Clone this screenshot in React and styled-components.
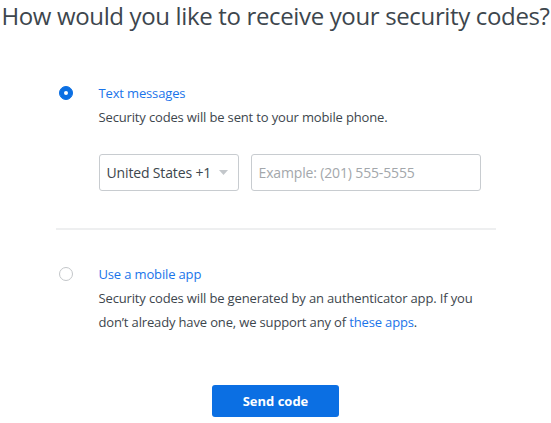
import React from 'react'
import styled, { createGlobalStyle } from 'styled-components'

const GlobalStyle = createGlobalStyle`
  body {
    margin: 0;
    background: #fff;
    font-family: "Open Sans", "Liberation Sans", sans-serif;
    color: #3d464d;
  }
`

const Page = styled.div`
  display: flex;
  flex-direction: column;
  align-items: center;
`

const Heading = styled.h1`
  margin: 0;
  font-size: 24px;
  letter-spacing: -0.35px;
  line-height: 32px;
  font-weight: 400;
  color: #3d464d;
  white-space: nowrap;
  text-align: center;
`

const Options = styled.div`
  width: 440px;
  margin-top: 49px;
  display: flex;
  flex-direction: column;
`

const OptionRow = styled.div`
  display: grid;
  grid-template-columns: 43px 1fr;
`

const RadioCell = styled.div`
  padding-left: 3px;
  height: 24px;
  display: flex;
  align-items: center;
`

const Radio = styled.span`
  box-sizing: border-box;
  width: 14px;
  height: 14px;
  border-radius: 50%;
  display: flex;
  align-items: center;
  justify-content: center;
  background: ${p => (p.$checked ? '#0b6fe3' : '#fff')};
  border: 1px solid ${p => (p.$checked ? '#0b6fe3' : '#c3c6c9')};

  &::after {
    content: '';
    width: 4px;
    height: 4px;
    border-radius: 50%;
    background: #fff;
    display: ${p => (p.$checked ? 'block' : 'none')};
  }
`

const Body = styled.div`
  font-size: 13px;
  letter-spacing: -0.15px;
  line-height: 24px;
`

const Title = styled.div`
  color: #1a74ea;
`

const Desc = styled.div`
  color: #3d464d;
`

const Link = styled.a`
  color: #1a74ea;
  text-decoration: none;
`

const PhoneRow = styled.div`
  display: flex;
  gap: 12px;
  margin-top: 25px;
`

const Select = styled.div`
  box-sizing: border-box;
  width: 140px;
  height: 37px;
  border: 1px solid #c8ccd0;
  border-radius: 3px;
  display: flex;
  align-items: center;
  justify-content: space-between;
  padding: 0 10px 0 7px;
  font-size: 14px;
  color: #3d464d;
`

const Input = styled.input`
  box-sizing: border-box;
  width: 230px;
  height: 37px;
  border: 1px solid #c8ccd0;
  border-radius: 3px;
  padding: 0 7px;
  font-family: inherit;
  font-size: 14px;
  letter-spacing: -0.15px;
  color: #3d464d;

  &::placeholder {
    color: #a3a7ab;
  }
`

const Divider = styled.hr`
  margin: 37px 0 32px;
  border: none;
  border-top: 2px solid #eeeff0;
`

const Button = styled.button`
  margin-top: 51px;
  width: 127px;
  height: 32px;
  border: none;
  border-radius: 3px;
  background: #0b6fe3;
  color: #fff;
  font-family: inherit;
  font-size: 13px;
  font-weight: 700;
`

const Caret = () => (
  <svg width="9" height="5" viewBox="0 0 9 5">
    <path d="M0 0h9L4.5 5z" fill="#c3c7cb" />
  </svg>
)

export default function App() {
  return (
    <Page>
      <GlobalStyle />
      <Heading>How would you like to receive your security codes?</Heading>
      <Options>
        <OptionRow>
          <RadioCell><Radio $checked /></RadioCell>
          <Body>
            <Title>Text messages</Title>
            <Desc>Security codes will be sent to your mobile phone.</Desc>
            <PhoneRow>
              <Select>
                <span>United States +1</span>
                <Caret />
              </Select>
              <Input placeholder="Example: (201) 555-5555" />
            </PhoneRow>
          </Body>
        </OptionRow>
        <Divider />
        <OptionRow>
          <RadioCell><Radio /></RadioCell>
          <Body>
            <Title>Use a mobile app</Title>
            <Desc>
              Security codes will be generated by an authenticator app. If you
              don’t already have one, we support any of <Link href="#">these apps</Link>.
            </Desc>
          </Body>
        </OptionRow>
      </Options>
      <Button>Send code</Button>
    </Page>
  )
}
